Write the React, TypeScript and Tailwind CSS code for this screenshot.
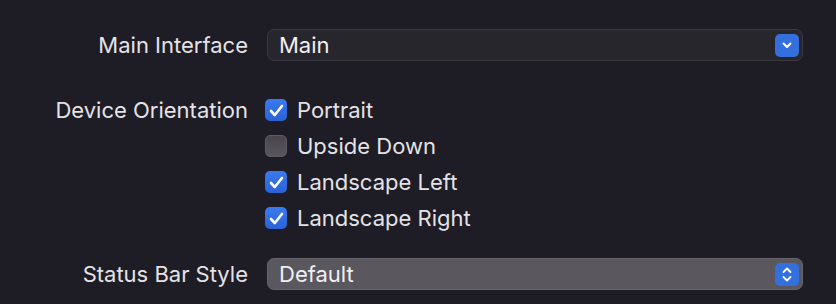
import React from 'react'

const Chevron = () => (
  <svg width="10" height="7" viewBox="0 0 10 7" fill="none">
    <path d="M1.5 1.5 L5 5 L8.5 1.5" stroke="white" strokeWidth="2" strokeLinecap="round" strokeLinejoin="round" />
  </svg>
)

const UpDown = () => (
  <svg width="10" height="15" viewBox="0 0 10 15" fill="none">
    <path d="M1.5 5 L5 1.5 L8.5 5" stroke="white" strokeWidth="1.8" strokeLinecap="round" strokeLinejoin="round" />
    <path d="M1.5 10 L5 13.5 L8.5 10" stroke="white" strokeWidth="1.8" strokeLinecap="round" strokeLinejoin="round" />
  </svg>
)

const Check = ({ on }: { on: boolean }) =>
  on ? (
    <div className="w-[22px] h-[22px] rounded-[5px] bg-gradient-to-b from-[#3a7af0] to-[#2a62d6] flex items-center justify-center shrink-0">
      <svg width="15" height="13" viewBox="0 0 15 13" fill="none">
        <path d="M2 7 L5.8 11 L13 2" stroke="white" strokeWidth="2.6" strokeLinecap="round" strokeLinejoin="round" />
      </svg>
    </div>
  ) : (
    <div className="w-[22px] h-[22px] rounded-[5px] bg-gradient-to-b from-[#48464c] to-[#58565c] border border-[#5e5c62] shrink-0" />
  )

const Option = ({ on, label }: { on: boolean; label: string }) => (
  <div className="h-[36px] flex items-center gap-[10px]">
    <Check on={on} />
    <span>{label}</span>
  </div>
)

export default function App() {
  return (
    <div
      className="w-[836px] h-[304px] bg-[#1e1c24] text-[#e4e3e7] text-[22px] pt-[29px]"
      style={{ fontFamily: 'Inter, "Noto Sans", sans-serif' }}
    >
      <div className="grid grid-cols-[248px_536px] gap-x-[19px] items-start">
        <div className="h-[32px] flex items-center justify-end">Main Interface</div>
        <div className="h-[32px] rounded-[7px] bg-[#28262d] border border-[#3b3940] flex items-center justify-between pl-[11px] pr-[3px] text-[#f0eff2]">
          <span>Main</span>
          <div className="w-[24px] h-[23px] rounded-[5px] bg-[#3370de] flex items-center justify-center">
            <Chevron />
          </div>
        </div>

        <div className="h-[36px] mt-[31px] flex items-center justify-end">Device Orientation</div>
        <div className="mt-[31px] flex flex-col -ml-[2px]">
          <Option on label="Portrait" />
          <Option on={false} label="Upside Down" />
          <Option on label="Landscape Left" />
          <Option on label="Landscape Right" />
        </div>

        <div className="h-[32px] mt-[22px] flex items-center justify-end">Status Bar Style</div>
        <div className="h-[32px] mt-[22px] rounded-[7px] bg-[#5a585e] border border-[#67656b] flex items-center justify-between pl-[11px] pr-[3px] text-[#f0eff2]">
          <span>Default</span>
          <div className="w-[24px] h-[23px] rounded-[5px] bg-[#3370de] flex items-center justify-center">
            <UpDown />
          </div>
        </div>
      </div>
    </div>
  )
}
